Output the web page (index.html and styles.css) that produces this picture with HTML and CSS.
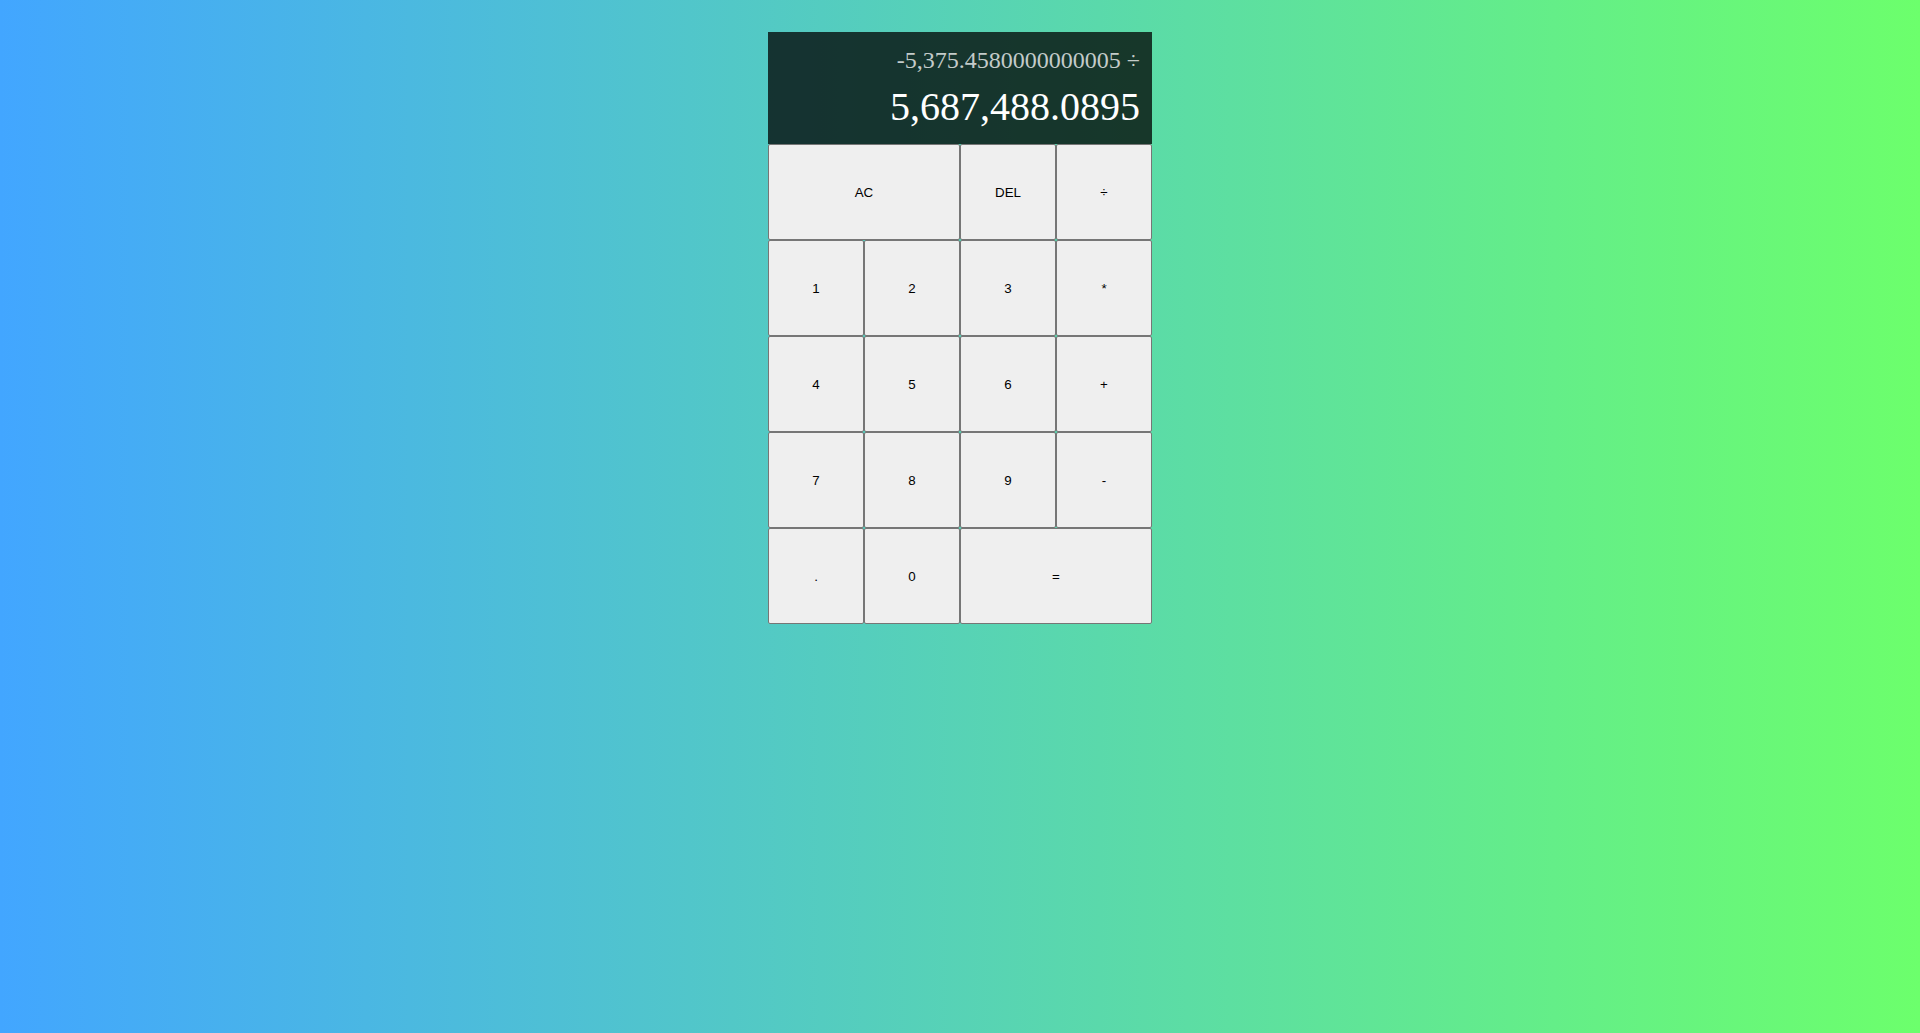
FILE: index.html
```html
<!DOCTYPE html>
<html>
<head>
<meta charset="utf-8">
<link rel="stylesheet" href="styles.css">
</head>
<body>
<div class="calculator-grid">
  <div class="output">
    <div class="previous-operand">-5,375.4580000000005 ÷</div>
    <div class="current-operand">5,687,488.0895</div>
  </div>
  <button class="span-two">AC</button>
  <button>DEL</button>
  <button>÷</button>
  <button>1</button>
  <button>2</button>
  <button>3</button>
  <button>*</button>
  <button>4</button>
  <button>5</button>
  <button>6</button>
  <button>+</button>
  <button>7</button>
  <button>8</button>
  <button>9</button>
  <button>-</button>
  <button>.</button>
  <button>0</button>
  <button class="span-two">=</button>
</div>
</body>
</html>
```
FILE: styles.css
```css
*, *::before, *::after {
  box-sizing: border-box;
}

html, body {
  margin: 0;
  padding: 0;
  min-height: 100vh;
}

body {
  background: linear-gradient(to right, #42a6ff, #6cff6c);
  font-family: "Liberation Serif", "Times New Roman", serif;
}

.calculator-grid {
  display: grid;
  justify-content: center;
  align-content: start;
  padding-top: 32px;
  grid-template-columns: repeat(4, 96px);
  grid-template-rows: minmax(112px, auto) repeat(5, 96px);
}

.calculator-grid > button {
  font-family: "Liberation Sans", Arial, sans-serif;
  font-size: 13.333px;
  color: #000;
  background-color: #efefef;
  border: 1px solid #767676;
  border-radius: 2px;
  padding: 1px 6px;
  margin: 0;
}

.span-two {
  grid-column: span 2;
}

.output {
  grid-column: 1 / -1;
  background-color: rgba(0, 0, 0, 0.75);
  display: flex;
  flex-direction: column;
  align-items: flex-end;
  justify-content: space-around;
  padding: 10px 12px 10px 10px;
  word-wrap: break-word;
  word-break: break-all;
}

.previous-operand {
  color: rgba(255, 255, 255, 0.75);
  font-size: 24px;
}

.current-operand {
  color: #fff;
  font-size: 40px;
}
```
